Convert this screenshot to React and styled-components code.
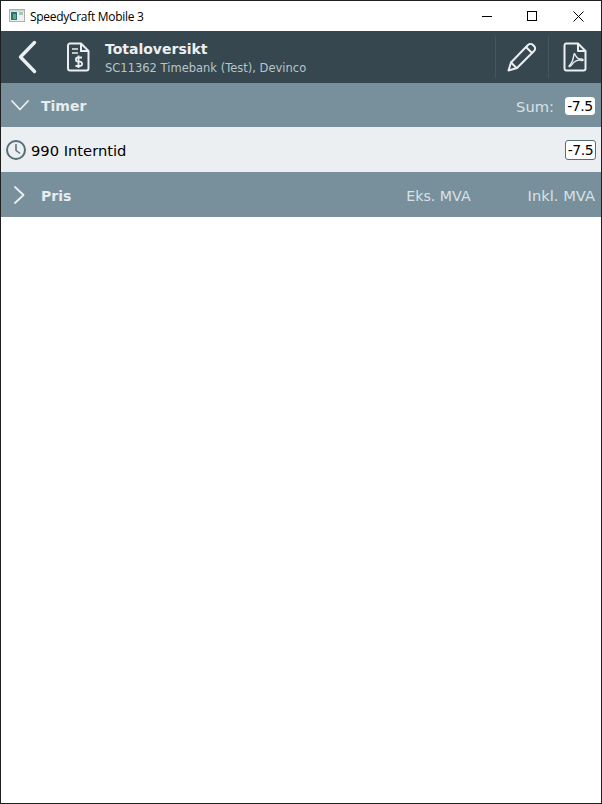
import React from 'react';
import styled, { createGlobalStyle } from 'styled-components';

const Global = createGlobalStyle`
  html, body { margin: 0; padding: 0; background: #fff; }
  #root { width: 602px; height: 804px; }
`;
const Win = styled.div`
  box-sizing: border-box; width: 602px; height: 804px; border: 1px solid #1f1f1f;
  display: flex; flex-direction: column; background: #fff;
  font-family: "DejaVu Sans", Verdana, sans-serif;
`;
const TitleBar = styled.div`
  height: 30px; display: flex; align-items: center; background: #fff; flex: none;
`;
const AppIcon = styled.svg`
  width: 16px; height: 16px; margin: 0 5px 0 8px; flex: none;
`;
const TitleText = styled.span`
  font-family: "Open Sans", "Noto Sans", sans-serif; font-size: 12px; color: #000; flex: 1; letter-spacing: -0.3px;
`;
const WinBtn = styled.div`
  width: 46px; height: 30px; display: flex; align-items: center; justify-content: center;
  box-sizing: border-box; padding-left: ${p => p.$nudge || 0}px;
  svg { display: block; }
`;
const Header = styled.header`
  height: 52px; background: #37474f; display: flex; align-items: center; flex: none;
`;
const BackBtn = styled.div`
  width: 52px; height: 52px; display: flex; align-items: center; justify-content: center; flex: none;
  margin-right: 9px;
`;
const DocWrap = styled.div`
  width: 32px; display: flex; justify-content: center; flex: none; margin-right: 11px;
`;
const Titles = styled.div`
  flex: 1; display: flex; flex-direction: column; gap: 3px; padding-top: 1px;
`;
const Title = styled.div`
  font-size: 14px; font-weight: 700; color: #eceff1; line-height: 17px;
`;
const Sub = styled.div`
  font-size: 11.5px; color: #b6c4cb; line-height: 14px;
`;
const HeadBtn = styled.div`
  width: 53px; height: 42px; border-left: 1px solid #46565e; display: flex; align-items: center; justify-content: center;
  flex: none; box-sizing: border-box;
`;
const Section = styled.div`
  height: ${p => p.$h}px; background: #78909c; display: flex; align-items: center; flex: none;
  padding-right: 6px; box-sizing: border-box;
`;
const Chevron = styled.div`
  width: 37px; margin-right: 3px; display: flex; justify-content: center; flex: none;
`;
const SectionTitle = styled.div`
  font-size: 14px; font-weight: 700; color: #e6ecef; flex: 1; padding-top: 2px;
`;
const SectionLabel = styled.div`
  font-size: ${p => p.$size || 14.7}px; color: #d8e1e5; margin-right: ${p => p.$mr || 0}px; padding-top: 2px;
`;
const Badge = styled.div`
  font-size: 14px; color: #000; background: #fff; border-radius: 3px; height: ${p => p.$dark ? 20 : 18}px; width: ${p => p.$dark ? 31 : 30}px;
  box-sizing: border-box; display: flex; align-items: center; justify-content: center;
  border: 1px solid ${p => p.$dark ? '#546e7a' : '#fff'};
  letter-spacing: -0.4px; margin-top: 1px;
`;
const Row = styled.div`
  height: 45px; background: #eceff1; display: flex; align-items: center; flex: none; padding: 0 5px; box-sizing: border-box;
`;
const ClockIcon = styled.svg`
  width: 20px; height: 20px; flex: none; margin-top: 1px;
`;
const RowLabel = styled.div`
  font-size: 14.7px; color: #000; flex: 1; margin-left: 5px; padding-top: 2px;
`;

export default function App() {
  return (
    <Win>
      <Global />
      <TitleBar>
        <AppIcon viewBox="0 0 16 16">
          <rect x="0.5" y="1.5" width="15" height="12" fill="#eef1f1" stroke="#a9b1b1" />
          <rect x="1" y="2" width="14" height="1.5" fill="#c8d0d0" />
          <rect x="2" y="4" width="6" height="8" fill="#2f6f7a" />
          <rect x="4" y="6" width="3" height="5" fill="#5fae7a" />
          <rect x="10" y="4" width="4" height="3" fill="#a9c6b4" />
        </AppIcon>
        <TitleText>SpeedyCraft Mobile 3</TitleText>
        <WinBtn $nudge={2}><svg width="10" height="10"><path d="M0 5.5H10" stroke="#000" /></svg></WinBtn>
        <WinBtn><svg width="10" height="10"><rect x="0.5" y="0.5" width="9" height="9" fill="none" stroke="#000" /></svg></WinBtn>
        <WinBtn><svg width="11" height="11"><path d="M0.5 0.5L10.5 10.5M10.5 0.5L0.5 10.5" stroke="#000" /></svg></WinBtn>
      </TitleBar>
      <Header>
        <BackBtn>
          <svg width="20" height="34" viewBox="0 0 20 34"><path d="M17.500 2.500L3.500 17l14 14.500" fill="none" stroke="#eceff1" strokeWidth="3.400" strokeLinecap="round" strokeLinejoin="round" /></svg>
        </BackBtn>
        <DocWrap>
          <svg width="23" height="30" viewBox="0 0 23 30">
            <path d="M3 1.500h11l7.500 7.500v17.500a2 2 0 0 1-2 2H3a2 2 0 0 1-2-2v-23a2 2 0 0 1 2-2z" fill="none" stroke="#eceff1" strokeWidth="2" strokeLinejoin="round" />
            <path d="M14 1.500V9h7.500" fill="none" stroke="#eceff1" strokeWidth="2" />
            <path d="M5 7h6M5 11h6" stroke="#eceff1" strokeWidth="1.600" />
            <path d="M15 15.500h-4a2 2 0 0 0 0 4.200h2a2 2 0 0 1 0 4.300H8.500M11.500 13.500v12.500" fill="none" stroke="#eceff1" strokeWidth="1.800" />
          </svg>
        </DocWrap>
        <Titles>
          <Title>Totaloversikt</Title>
          <Sub>SC11362 Timebank (Test), Devinco</Sub>
        </Titles>
        <HeadBtn>
          <svg width="30" height="30" viewBox="0 0 30 30" fill="none" stroke="#eceff1" strokeWidth="2" strokeLinejoin="round" strokeLinecap="round">
            <path d="M1.500 28.500l2.500-8L19 5l6 6-15 15z" />
            <path d="M19 5l2-2c1.500-1.500 3.500-1.500 5 0l1 1c1.500 1.500 1.500 3.500 0 5l-2 2" />
            <path d="M4 20.500l5.500 5.500" />
          </svg>
        </HeadBtn>
        <HeadBtn>
          <svg width="24" height="30" viewBox="0 0 24 30" fill="none" stroke="#eceff1" strokeWidth="2" strokeLinejoin="round">
            <path d="M3 1.500h12l7.500 7.500v17.500a2 2 0 0 1-2 2H3a2 2 0 0 1-1.500-2v-23A2 2 0 0 1 3 1.500z" />
            <path d="M15 1.500V9h7.500" />
            <path d="M11.500 11.500c-1.500 0 .5 6-5 12-1.500 2 1.500 1.500 4-3 2-1.500 6-3 8.500-2 2 0 1-2-2-1.500-2 0-4-2-5.500-5.500z" strokeWidth="1.400" />
          </svg>
        </HeadBtn>
      </Header>
      <Section $h={44}>
        <Chevron>
          <svg width="18" height="11" viewBox="0 0 18 11"><path d="M1 1l8 8.500L17 1" fill="none" stroke="#eceff1" strokeWidth="1.800" strokeLinecap="round" strokeLinejoin="round" /></svg>
        </Chevron>
        <SectionTitle>Timer</SectionTitle>
        <SectionLabel $mr={11}>Sum:</SectionLabel>
        <Badge>-7.5</Badge>
      </Section>
      <Row>
        <ClockIcon viewBox="0 0 20 20" fill="none" stroke="#546e7a" strokeWidth="2" strokeLinecap="round" strokeLinejoin="round">
          <circle cx="10" cy="10" r="9" />
          <path d="M10 4.500V10.500l3.500 2.500" strokeWidth="1.500" />
        </ClockIcon>
        <RowLabel>990 Interntid</RowLabel>
        <Badge $dark>-7.5</Badge>
      </Row>
      <Section $h={45}>
        <Chevron>
          <svg width="11" height="18" viewBox="0 0 11 18"><path d="M1 1l8.500 8L1 17" fill="none" stroke="#eceff1" strokeWidth="1.800" strokeLinecap="round" strokeLinejoin="round" /></svg>
        </Chevron>
        <SectionTitle>Pris</SectionTitle>
        <SectionLabel $mr={57} $size={14.2}>Eks. MVA</SectionLabel>
        <SectionLabel>Inkl. MVA</SectionLabel>
      </Section>
    </Win>
  );
}
